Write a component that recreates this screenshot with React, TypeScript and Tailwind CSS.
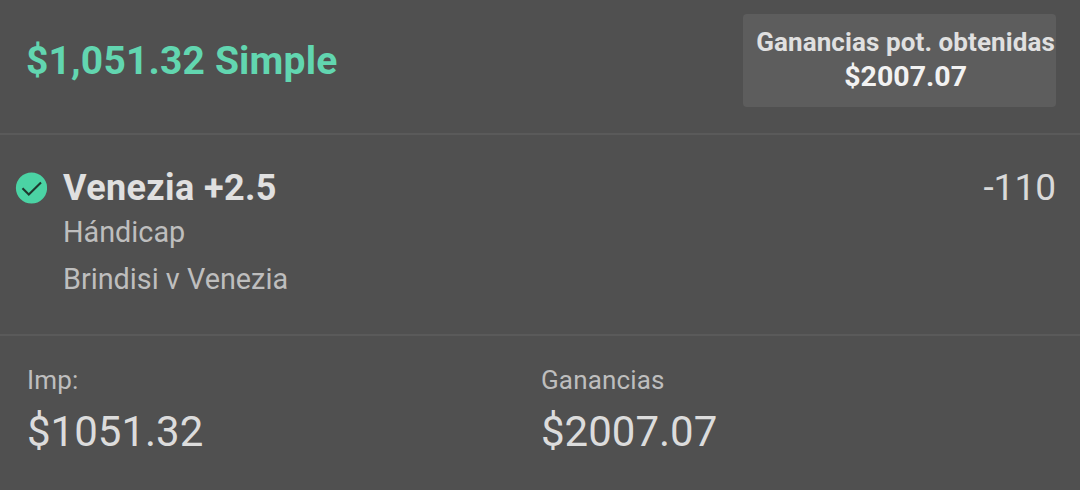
export default function App() {
  return (
    <main className="flex h-[490px] w-[1080px] flex-col overflow-hidden bg-[#505050] font-['Roboto',sans-serif] text-[#e0e0e0]">
      <header className="flex h-[135px] items-start justify-between border-b-2 border-[#5a5a5a] pl-[26px] pr-6 pt-[14px]">
        <h1 className="mt-[23px] whitespace-nowrap text-[39px] font-bold leading-[48px] tracking-[0.17px] text-[#62d6b0]">$1,051.32 Simple</h1>
        <div className="flex h-[93px] w-[313px] flex-col items-end rounded bg-[#5d5d5d] pt-[11px] text-right font-bold">
          <p className="whitespace-nowrap pr-px text-[26px] leading-[34px] tracking-[0.1px]">Ganancias pot. obtenidas</p>
          <p className="mr-[89px] text-[28.5px] leading-[36px] text-[#f2f2f2]">$2007.07</p>
        </div>
      </header>
      <section className="flex h-[201px] items-start border-b-2 border-[#5a5a5a] pl-[15px] pr-6 pt-[29px]">
        <svg className="mt-2 size-8 shrink-0" viewBox="0 0 32 32" fill="none">
          <circle cx="16.5" cy="16" r="15.6" fill="#4bd3a4" />
          <path d="M7.5 16.3L13.8 22.5L26 10.4" stroke="#20382f" strokeWidth="2.1" />
        </svg>
        <div className="ml-4 flex-1 whitespace-nowrap">
          <h2 className="mb-[-2px] text-[36px] font-bold leading-[48px] tracking-[0.38px]">Venezia +2.5</h2>
          <p className="text-[28.8px] leading-[44px] text-[#bebebe]">Hándicap</p>
          <p className="text-[28.8px] leading-[50px] text-[#bebebe]">Brindisi v Venezia</p>
        </div>
        <span className="text-[37px] leading-[48px] text-[#d9d9d9]">-110</span>
      </section>
      <footer className="grid grid-cols-[514px_1fr] pl-[27px] pt-[28px]">
        <div>
          <p className="text-[26px] leading-[32px] tracking-[0.15px] text-[#bebebe]">Imp:</p>
          <p className="text-[42px] leading-[72px] text-[#dcdcdc]">$1051.32</p>
        </div>
        <div>
          <p className="text-[26px] leading-[32px] tracking-[0.15px] text-[#bebebe]">Ganancias</p>
          <p className="text-[42px] leading-[72px] text-[#dcdcdc]">$2007.07</p>
        </div>
      </footer>
    </main>
  );
}
